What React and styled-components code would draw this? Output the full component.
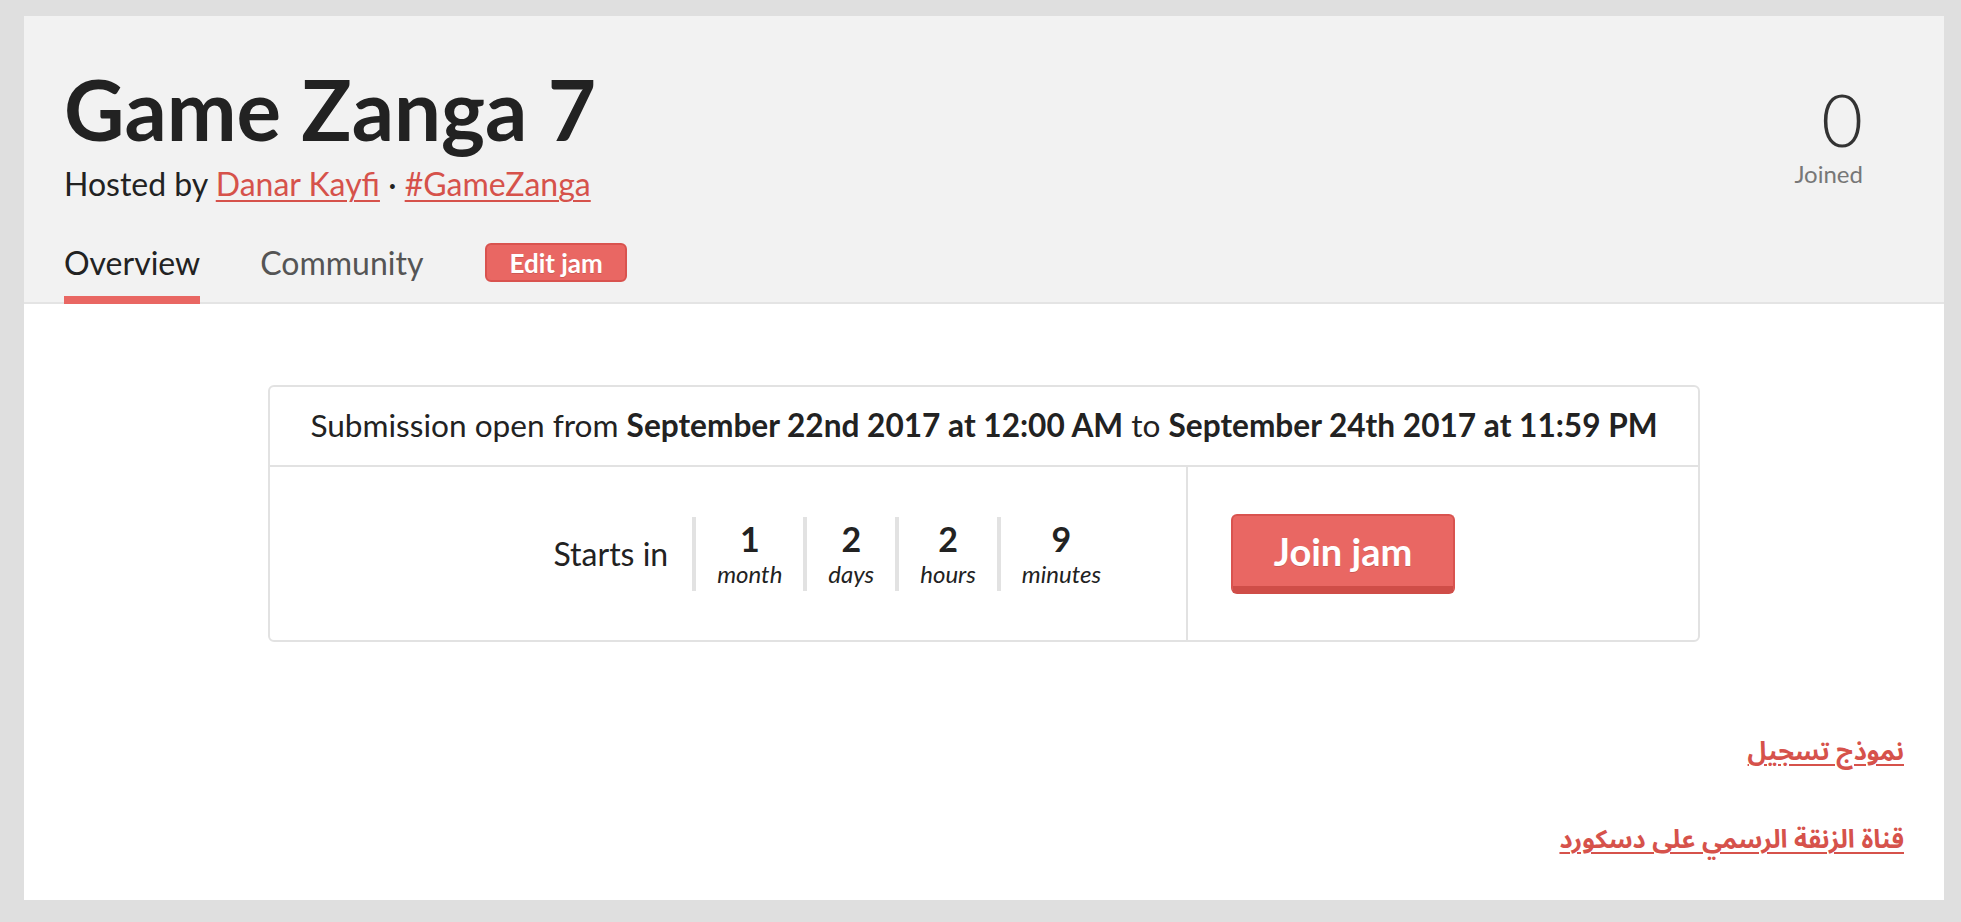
import React from "react";
import styled, { createGlobalStyle } from "styled-components";

const GlobalStyle = createGlobalStyle`
  html, body { margin: 0; padding: 0; height: 100%; }
  body {
    background: #dfdfdf;
    font-family: Lato, "Open Sans", "DejaVu Sans", sans-serif;
    color: #222;
  }
  #root { min-height: 100%; }
  * { box-sizing: border-box; }
`;

const Page = styled.div`
  height: 100vh;
  padding: 16px 17px 22px 24px;
  display: flex;
  flex-direction: column;
`;

const Container = styled.main`
  flex: 1;
  min-height: 0;
  overflow: hidden;
  background: #fff;
  display: flex;
  flex-direction: column;
`;

const Header = styled.header`
  background: #f2f2f2;
  border-bottom: 2px solid #e4e4e4;
  padding: 43px 40px 0 40px;
`;

const HeaderTop = styled.div`
  display: flex;
  justify-content: space-between;
  align-items: flex-start;
`;

const TitleBlock = styled.div`
  display: flex;
  flex-direction: column;
`;

const Title = styled.h1`
  margin: 0;
  font-size: 83.4px;
  font-weight: 700;
  line-height: 1.2;
  color: #222;
`;

const Hosted = styled.div`
  font-size: 32px;
  line-height: 48px;
  margin-top: 1px;
  color: #222;
`;

const Link = styled.a`
  color: #d6524b;
  text-decoration: underline;
  text-decoration-thickness: 2px;
  text-underline-offset: 4px;
`;

const Stats = styled.div`
  display: flex;
  flex-direction: column;
  align-items: flex-end;
  padding-right: 41px;
  padding-top: 17px;
`;

const StatValue = styled.div`
  font-size: 72px;
  font-weight: 300;
  line-height: 86px;
  color: #333;
`;

const StatLabel = styled.div`
  font-size: 24px;
  line-height: 24px;
  color: #777;
`;

const Tabs = styled.nav`
  display: flex;
  align-items: center;
  gap: 60px;
  margin-top: 35px;
`;

const Tab = styled.a`
  font-size: 32px;
  line-height: 40px;
  color: ${(p) => (p.$active ? "#222" : "#555")};
  text-decoration: none;
  padding-bottom: 13px;
  border-bottom: 8px solid ${(p) => (p.$active ? "#e96763" : "transparent")};
  margin-bottom: -2px;
`;

const EditButton = styled.button`
  font-family: inherit;
  font-size: 26px;
  font-weight: 700;
  color: #fff;
  background: #e96763;
  border: 2px solid #d9534f;
  border-radius: 6px;
  height: 39px;
  padding: 0 22px;
  margin-left: 2px;
  text-shadow: 0 1px 0 rgba(0, 0, 0, 0.15);
  line-height: 1;
  margin-bottom: 20px;
  cursor: pointer;
`;

const Body = styled.section`
  padding: 81px 40px 0 40px;
  display: flex;
  flex-direction: column;
`;

const Card = styled.div`
  width: 1432px;
  align-self: center;
  border: 2px solid #e2e2e2;
  border-radius: 6px;
`;

const CardHeader = styled.div`
  text-align: center;
  font-size: 31.6px;
  line-height: 40px;
  padding: 18px 20px 20px;
  border-bottom: 2px solid #e2e2e2;
  color: #222;
`;

const CardRow = styled.div`
  display: grid;
  grid-template-columns: 918px 1fr;
  min-height: 173px;
`;

const CountdownCell = styled.div`
  display: flex;
  align-items: center;
  justify-content: flex-end;
  padding-right: 64px;
  border-right: 2px solid #e2e2e2;
`;

const StartsIn = styled.div`
  font-size: 32px;
  margin-right: 24px;
  color: #222;
`;

const Unit = styled.div`
  display: flex;
  flex-direction: column;
  align-items: center;
  border-left: 4px solid #e2e2e2;
  padding: 2px 21px 2px;
`;

const UnitValue = styled.div`
  font-size: 34px;
  font-weight: 700;
  line-height: 40px;
  color: #222;
`;

const UnitLabel = styled.div`
  font-size: 24px;
  font-style: italic;
  line-height: 30px;
  color: #222;
`;

const ActionCell = styled.div`
  display: flex;
  align-items: center;
  padding-left: 43px;
`;

const JoinButton = styled.button`
  font-family: inherit;
  font-size: 38px;
  font-weight: 700;
  color: #fff;
  background: #e96763;
  border: 2px solid #d9534f;
  border-bottom: 8px solid #cf4d48;
  border-radius: 6px;
  height: 80px;
  width: 224px;
  padding: 0;
  text-shadow: 0 1px 0 rgba(0, 0, 0, 0.15);
  cursor: pointer;
`;

const Description = styled.div`
  margin-top: 86px;
  display: flex;
  flex-direction: column;
  gap: 40px;
`;

const Para = styled.p`
  margin: 0;
  text-align: right;
  font-size: 25.4px;
  line-height: 48px;
  font-family: "Noto Sans Arabic", "Noto Naskh Arabic", "DejaVu Sans", sans-serif;
  font-weight: 700;
`;

const units = [
  { v: "1", l: "month" },
  { v: "2", l: "days" },
  { v: "2", l: "hours" },
  { v: "9", l: "minutes" },
];

export default function App() {
  return (
    <>
      <GlobalStyle />
      <Page>
        <Container>
          <Header>
            <HeaderTop>
              <TitleBlock>
                <Title>Game Zanga 7</Title>
                <Hosted>
                  Hosted by <Link href="#">Danar Kayfi</Link> ·{" "}
                  <Link href="#">#GameZanga</Link>
                </Hosted>
              </TitleBlock>
              <Stats>
                <StatValue>0</StatValue>
                <StatLabel>Joined</StatLabel>
              </Stats>
            </HeaderTop>
            <Tabs>
              <Tab $active href="#">Overview</Tab>
              <Tab href="#">Community</Tab>
              <EditButton>Edit jam</EditButton>
            </Tabs>
          </Header>
          <Body>
            <Card>
              <CardHeader>
                Submission open from <b>September 22nd 2017 at 12:00 AM</b> to{" "}
                <b>September 24th 2017 at 11:59 PM</b>
              </CardHeader>
              <CardRow>
                <CountdownCell>
                  <StartsIn>Starts in</StartsIn>
                  {units.map((u, i) => (
                    <Unit key={i}>
                      <UnitValue>{u.v}</UnitValue>
                      <UnitLabel>{u.l}</UnitLabel>
                    </Unit>
                  ))}
                </CountdownCell>
                <ActionCell>
                  <JoinButton>Join jam</JoinButton>
                </ActionCell>
              </CardRow>
            </Card>
            <Description>
              <Para dir="rtl">
                <Link href="#">نموذج تسجيل</Link>
              </Para>
              <Para dir="rtl">
                <Link href="#">قناة الزنقة الرسمي على دسكورد</Link>
              </Para>
            </Description>
          </Body>
        </Container>
      </Page>
    </>
  );
}
